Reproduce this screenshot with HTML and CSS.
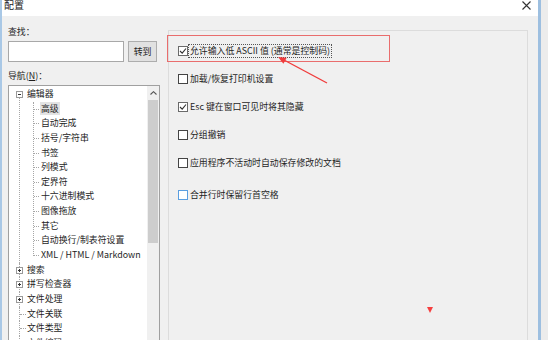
FILE: index.html
```html
<!DOCTYPE html>
<html lang="zh-CN">
<head>
<meta charset="UTF-8" />
<title>配置</title>
<link rel="stylesheet" href="styles.css">
</head>
<body>

<div class="window">
  <div class="titlebar">
    <span class="title">配置</span>
    <svg class="close" width="9" height="9" viewBox="0 0 9 9"><path d="M0.5 0.5 L8.5 8.5 M8.5 0.5 L0.5 8.5" stroke="#333" stroke-width="1.1" fill="none"/></svg>
  </div>

  <div class="content">
    <div class="left">
      <div class="label">查找：</div>
      <div class="search-row">
        <div class="input"></div>
        <button class="btn">转到</button>
      </div>
      <div class="label nav-label">导航(<u>N</u>)：</div>

      <div class="tree">
        <ul class="tree-list">
          <li class="root first">
            <div class="row"><span class="exp minus"></span>编辑器</div>
            <ul class="children">
              <li class="row"><span class="sel">高级</span></li>
              <li class="row">自动完成</li>
              <li class="row">括号/字符串</li>
              <li class="row">书签</li>
              <li class="row">列模式</li>
              <li class="row">定界符</li>
              <li class="row">十六进制模式</li>
              <li class="row">图像拖放</li>
              <li class="row">其它</li>
              <li class="row">自动换行/制表符设置</li>
              <li class="row">XML / HTML / Markdown</li>
            </ul>
          </li>
          <li class="root"><div class="row"><span class="exp plus"></span>搜索</div></li>
          <li class="root"><div class="row"><span class="exp plus"></span>拼写检查器</div></li>
          <li class="root"><div class="row"><span class="exp plus"></span>文件处理</div></li>
          <li class="root leaf"><div class="row">文件关联</div></li>
          <li class="root leaf"><div class="row">文件类型</div></li>
          <li class="root leaf"><div class="row">文件编码</div></li>
        </ul>
        <div class="scroll">
          <div class="up">
            <svg width="7" height="4" viewBox="0 0 7 4"><path d="M0.5 3.5 L3.5 0.7 L6.5 3.5" stroke="#555" stroke-width="1.1" fill="none"/></svg>
          </div>
          <div class="thumb"></div>
        </div>
      </div>
    </div>

    <div class="panel">
      <div class="opt">
        <span class="box checked"><svg width="8" height="8" viewBox="0 0 8 8"><path d="M1 4 L3.2 6.2 L7 1.5" stroke="#333" stroke-width="1.1" fill="none"/></svg></span>
        <span class="focus">允许输入低 ASCII 值 (通常是控制码)</span>
      </div>
      <div class="opt">
        <span class="box"></span>
        <span class="txt">加载/恢复打印机设置</span>
      </div>
      <div class="opt">
        <span class="box checked"><svg width="8" height="8" viewBox="0 0 8 8"><path d="M1 4 L3.2 6.2 L7 1.5" stroke="#333" stroke-width="1.1" fill="none"/></svg></span>
        <span class="txt">Esc 键在窗口可见时将其隐藏</span>
      </div>
      <div class="opt">
        <span class="box"></span>
        <span class="txt">分组撤销</span>
      </div>
      <div class="opt">
        <span class="box"></span>
        <span class="txt">应用程序不活动时自动保存修改的文档</span>
      </div>
      <div class="opt spaced">
        <span class="box hover"></span>
        <span class="txt">合并行时保留行首空格</span>
      </div>
    </div>
  </div>

  <!-- annotation drawn over the dialog -->
  <div class="mark"></div>
  <svg class="annot" width="540" height="340" viewBox="0 0 540 340">
    <line x1="325" y1="83" x2="282" y2="60" stroke="#f03c3c" stroke-width="1.4"/>
    <polygon points="276,57 284.7,57.7 281.4,63.8" fill="#f03c3c"/>
    <polygon points="425,307 431,307 428,313" fill="#f54040"/>
  </svg>
</div>

</body>
</html>
```

FILE: styles.css
```css
body {
  margin: 0;
  background: #ececec;
  font-family: "Noto Sans CJK SC", "Noto Sans", sans-serif;
  font-size: 8.9px;
  color: #1e1e1e;
}
.window {
  position: relative;
  width: 536px;
  height: 340px;
  background: #f0f0f0;
  border-left: 2px solid #a9c8e6;
  border-right: 3px solid #9dbfe0;
  overflow: hidden;
}
.titlebar {
  height: 16px;
  background: #fff;
  display: flex;
  justify-content: space-between;
  align-items: flex-start;
  padding: 0 7px 0 2px;
}
.title {
  font-size: 10px;
  line-height: 10px;
  color: #222;
}
.close {
  margin-top: 1px;
}
.content {
  display: flex;
  gap: 8px;
  padding: 10px 0 0 6px;
}
.left {
  width: 152px;
  flex: none;
}
.label {
  height: 12px;
  line-height: 12px;
}
.nav-label {
  margin-top: 8px;
}
.search-row {
  display: flex;
  gap: 4px;
  margin-top: 3px;
}
.input {
  width: 114px;
  height: 19px;
  background: #fff;
  border: 1px solid #a8a8a8;
}
.btn {
  width: 29px;
  height: 21px;
  padding: 0;
  background: #e1e1e1;
  border: 1px solid #adadad;
  font-family: inherit;
  font-size: 8.9px;
  color: #1e1e1e;
}
.tree {
  margin-top: 3px;
  height: 262px;
  border: 1px solid #a0a0a0;
  background: #fff;
  display: flex;
}
.tree-list, .children {
  list-style: none;
  margin: 0;
  padding: 0;
}
.tree-list {
  flex: 1;
  overflow: hidden;
  padding-top: 1px;
}
.root {
  position: relative;
}
.root::before {
  content: "";
  position: absolute;
  left: 10px;
  top: 0;
  bottom: 0;
  border-left: 1px dotted #a6a6a6;
}
.root.first::before {
  top: 7px;
}
.row {
  position: relative;
  height: 14.65px;
  line-height: 14.65px;
  padding-left: 18px;
  white-space: nowrap;
}
.root > .row {
  padding-left: 7px;
}
.leaf > .row {
  padding-left: 18px;
}
.leaf > .row::after {
  content: "";
  position: absolute;
  left: 11px;
  top: 7px;
  width: 6px;
  border-top: 1px dotted #a6a6a6;
}
.exp {
  position: relative;
  z-index: 1;
  display: inline-block;
  width: 5px;
  height: 5px;
  margin-right: 4px;
  vertical-align: -1px;
  border: 1px solid #9a9a9a;
  background: #fff;
}
.exp::before {
  content: "";
  position: absolute;
  left: 1px;
  top: 2px;
  width: 3px;
  height: 1px;
  background: #333;
}
.exp.plus::after {
  content: "";
  position: absolute;
  left: 2px;
  top: 1px;
  width: 1px;
  height: 3px;
  background: #333;
}
.children {
  position: relative;
}
.children::before {
  content: "";
  position: absolute;
  left: 24px;
  top: 0;
  bottom: 7px;
  border-left: 1px dotted #a6a6a6;
}
.children .row {
  padding-left: 32px;
}
.children .row::after {
  content: "";
  position: absolute;
  left: 25px;
  top: 7px;
  width: 5px;
  border-top: 1px dotted #a6a6a6;
}
.sel {
  display: inline-block;
  line-height: 13px;
  padding: 0 1px;
  margin-left: -1px;
  background: #e3e3e3;
}
.scroll {
  width: 12px;
  flex: none;
  background: #f0f0f0;
}
.up {
  height: 14px;
  display: flex;
  align-items: center;
  justify-content: center;
}
.thumb {
  height: 143px;
  margin: 0 1px;
  background: #cdcdcd;
}
.panel {
  width: 360px;
  height: 320px;
  margin-top: 4px;
  border: 1px solid #dcdcdc;
  padding: 6px 0 0 9px;
  box-sizing: border-box;
}
.opt {
  height: 28px;
  display: flex;
  align-items: center;
  white-space: nowrap;
}
.opt.spaced {
  margin-top: 4px;
}
.box {
  width: 8px;
  height: 8px;
  border: 1px solid #444;
  background: #fff;
  display: flex;
  align-items: center;
  justify-content: center;
  flex: none;
}
.box.checked {
  border-color: #6a6a6a;
}
.box.hover {
  border-color: #5a9ee0;
}
.txt {
  margin-left: 2px;
  line-height: 12px;
}
.focus {
  padding: 0 1px;
  line-height: 12px;
  border: 1px dotted #555;
}
.mark {
  position: absolute;
  left: 165px;
  top: 35px;
  width: 221px;
  height: 25px;
  border: 1px solid #e96d6d;
}
.annot {
  position: absolute;
  left: 0;
  top: 0;
}
```
